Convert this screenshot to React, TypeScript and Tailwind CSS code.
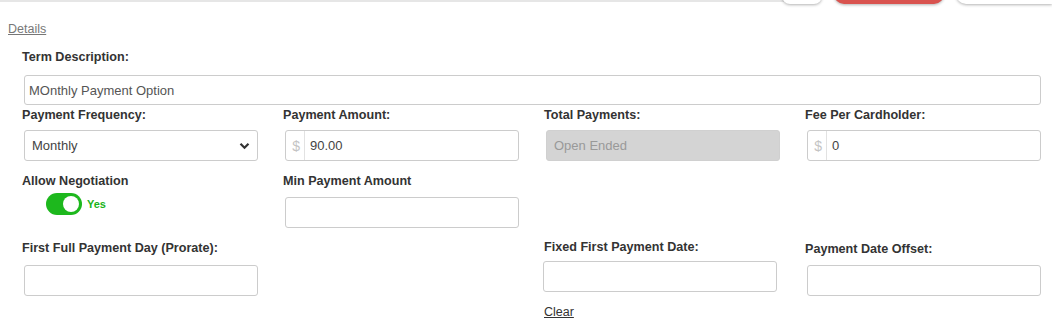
import React, { useState } from 'react';

const font = { fontFamily: '"Liberation Sans", Arial, sans-serif' };

const Label: React.FC<{ children: React.ReactNode; className?: string }> = ({ children, className = '' }) => (
  <div className={`text-[12.6px] leading-[16px] font-bold text-[#333] ${className}`}>{children}</div>
);

const TextBox: React.FC<{ value?: string; className?: string }> = ({ value = '', className = 'ml-[2px]' }) => (
  <input
    readOnly
    value={value}
    className={`block w-[234px] h-[31px] border border-[#ccc] rounded-[3px] bg-white px-[6px] text-[13px] text-[#555] outline-none ${className}`}
    style={font}
  />
);

const MoneyBox: React.FC<{ value: string }> = ({ value }) => (
  <div className="ml-[2px] w-[234px] h-[31px] border border-[#ccc] rounded-[3px] bg-white flex items-center text-[13px]">
    <span className="w-[19px] h-full flex items-center justify-end pr-[4px] border-r border-[#e2e2e2] text-[#c4c4c4] text-[14px]">$</span>
    <span className="pl-[5px] text-[#444]">{value}</span>
  </div>
);

export default function App() {
  const [negotiate, setNegotiate] = useState(true);

  return (
    <div className="w-[1052px] h-[329px] bg-white overflow-hidden relative text-[12px] leading-[16px]" style={font}>
      {/* cut-off toolbar at the top */}
      <div className="h-[2px] bg-[#e6e6e6] w-[790px]" />
      <div className="absolute top-0 right-0 flex items-end gap-[12px] h-[4px]">
        <div className="w-[40px] h-[30px] rounded-[8px] bg-white shadow-[0_1px_3px_rgba(0,0,0,0.3)]" />
        <div className="w-[110px] h-[30px] rounded-[10px] bg-[#d9534f] shadow-[0_1px_3px_rgba(0,0,0,0.3)]" />
        <div className="w-[96px] h-[30px] rounded-l-[10px] bg-white shadow-[0_1px_3px_rgba(0,0,0,0.3)]" />
      </div>

      <div className="pt-[19px] pl-[8px]">
        <a className="block w-fit text-[12.5px] leading-[16px] text-[#777] underline">Details</a>
      </div>

      <div className="pl-[22px] pr-[9px]">
        <Label className="mt-[12px]">Term Description:</Label>
        <input
          readOnly
          value="MOnthly Payment Option"
          className="block mt-[10px] ml-[2px] w-[1017px] h-[30px] border border-[#ccc] rounded-[3px] px-[4px] text-[13px] text-[#555] outline-none"
          style={font}
        />

        <div className="grid grid-cols-[237px_237px_237px_237px] gap-x-[24px]">
          {/* row 2 */}
          <div className="mt-[2px]">
            <Label>Payment Frequency:</Label>
            <div className="mt-[7px] ml-[2px] w-[234px] h-[31px] border border-[#ccc] rounded-[3px] flex items-center justify-between pl-[7px] pr-[7px] text-[13px] text-[#444]">
              <span>Monthly</span>
              <svg width="11" height="8" viewBox="0 0 11 8">
                <path d="M1.5 1.8 L5.5 5.8 L9.5 1.8" fill="none" stroke="#333" strokeWidth="2.2" />
              </svg>
            </div>
          </div>
          <div className="mt-[2px]">
            <Label>Payment Amount:</Label>
            <div className="mt-[7px]"><MoneyBox value="90.00" /></div>
          </div>
          <div className="mt-[2px]">
            <Label>Total Payments:</Label>
            <div className="mt-[7px] ml-[2px] w-[234px] h-[31px] border border-[#d0d0d0] rounded-[3px] bg-[#d4d4d4] flex items-center px-[7px] text-[13px] text-[#999]">
              Open Ended
            </div>
          </div>
          <div className="mt-[2px]">
            <Label>Fee Per Cardholder:</Label>
            <div className="mt-[7px]"><MoneyBox value="0" /></div>
          </div>

          {/* row 3 */}
          <div className="mt-[12px]">
            <Label>Allow Negotiation</Label>
            <div className="mt-[4px] ml-[24px] flex items-center gap-[5px]">
              <button
                onClick={() => setNegotiate(!negotiate)}
                className={`w-[36px] h-[22px] rounded-full flex items-center px-[3px] ${negotiate ? 'bg-[#1db81d] justify-end' : 'bg-[#ccc] justify-start'}`}
              >
                <span className="w-[16px] h-[16px] rounded-full bg-white" />
              </button>
              <span className="text-[11px] font-bold text-[#19b319]">{negotiate ? 'Yes' : 'No'}</span>
            </div>
          </div>
          <div className="mt-[12px]">
            <Label>Min Payment Amount</Label>
            <TextBox className="ml-[2px] mt-[8px] h-[30px]" />
          </div>
          <div />
          <div />

          {/* row 4 */}
          <div className="mt-[12px]">
            <Label>First Full Payment Day (Prorate):</Label>
            <TextBox className="ml-[2px] mt-[9px]" />
          </div>
          <div />
          <div className="mt-[11px]">
            <Label>Fixed First Payment Date:</Label>
            <TextBox className="-ml-[1px] mt-[6px]" />
            <a className="block w-fit mt-[12px] text-[12.5px] leading-[16px] text-[#333] underline">Clear</a>
          </div>
          <div className="mt-[13px]">
            <Label>Payment Date Offset:</Label>
            <TextBox className="ml-[2px] mt-[8px]" />
          </div>
        </div>
      </div>
    </div>
  );
}
